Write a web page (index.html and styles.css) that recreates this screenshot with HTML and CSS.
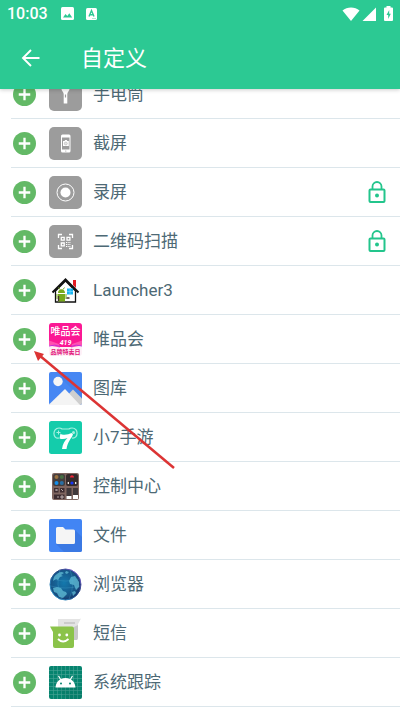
FILE: index.html
```
<!DOCTYPE html>
<html lang="zh-CN">
<head>
  <meta charset="UTF-8">
  <meta name="viewport" content="width=device-width, initial-scale=1">
  <title>自定义</title>
  <link rel="stylesheet" href="styles.css">
</head>
<body>
  <svg class="sprite" aria-hidden="true">
    <symbol id="plus" viewBox="0 0 22 22">
      <circle cx="11" cy="11" r="11" fill="#63b966"/>
      <path d="M11 5.500v11M5.500 11h11" stroke="#fff" stroke-width="2.200"/>
    </symbol>
    <symbol id="lock" viewBox="0 0 18 24">
      <path d="M4.500 9.500V6.500a4.500 4.500 0 0 1 9 0v3" fill="none" stroke="#23c58c" stroke-width="1.800"/>
      <rect x="1.500" y="9.500" width="15" height="12.500" rx="1" fill="none" stroke="#23c58c" stroke-width="2"/>
      <circle cx="9" cy="15.500" r="2" fill="#23c58c"/>
    </symbol>
  </svg>

  <header class="header">
    <div class="status">
      <span class="time">10:03</span>
      <svg class="status-picture" width="13" height="13" viewBox="0 0 13 13">
        <rect width="13" height="13" rx="1.500" fill="#fff"/>
        <path d="M2 10.500 4.500 7l1.800 2 2-2.800 2.900 4.300z" fill="#2cc993"/>
      </svg>
      <svg class="status-letter" width="11" height="12" viewBox="0 0 11 12">
        <rect width="11" height="12" rx="1.500" fill="#fff"/>
        <path d="M3 8.500 5.500 2.500 8 8.500M3.800 6.700h3.400" fill="none" stroke="#2cc993" stroke-width="1.400"/>
        <path d="M6 10.500h4" stroke="#9ce3c8" stroke-width=".8"/>
      </svg>
      <div class="signals">
        <svg width="18" height="14" viewBox="0 0 18 14"><path d="M.5 3.500C5-.5 13-.5 17.500 3.500L9 14z" fill="#fff"/></svg>
        <svg width="14" height="14" viewBox="0 0 14 14"><path d="M14 .5V14H.5z" fill="#fff"/></svg>
        <svg class="battery" width="9" height="15" viewBox="0 0 9 15">
          <path d="M2.500 1.500V0h4v1.500H8a1 1 0 0 1 1 1V14a1 1 0 0 1-1 1H1a1 1 0 0 1-1-1V2.500a1 1 0 0 1 1-1z" fill="#fff"/>
          <path d="M5.200 4 2.500 9h1.700v4L6.800 7.800H5.200z" fill="#2cc993"/>
        </svg>
      </div>
    </div>
    <div class="toolbar">
      <button class="back" aria-label="返回">
        <svg width="20" height="20" viewBox="0 0 20 20"><path d="M18.500 10H2.500M10 2 2 10l8 8" fill="none" stroke="#fff" stroke-width="1.900"/></svg>
      </button>
      <h1>自定义</h1>
    </div>
  </header>

  <main class="content">
    <ul class="list">
      <li class="item">
        <button class="add" aria-label="添加 手电筒"><svg><use href="#plus"/></svg></button>
        <svg class="icon" viewBox="0 0 33 33">
          <rect width="33" height="33" rx="5" fill="#9c9c9c"/>
          <path d="M12.500 7h8v4c0 2-2.200 3-2.200 5v9.500h-3.600V16c0-2-2.200-3-2.200-5z" fill="#fff"/>
          <path d="M16.500 16.500v3" stroke="#9c9c9c" stroke-width="1.200"/>
        </svg>
        <span class="name">手电筒</span>
      </li>
      <li class="item">
        <button class="add" aria-label="添加 截屏"><svg><use href="#plus"/></svg></button>
        <svg class="icon" viewBox="0 0 33 33">
          <rect width="33" height="33" rx="5" fill="#9c9c9c"/>
          <rect x="12" y="7.500" width="9.500" height="18" rx="1.500" fill="#fff"/>
          <path d="M13 10.500h7.500v12H13z" fill="#9c9c9c"/>
          <path d="M14 14h1.500l.6-1h1.600l.6 1h1.500v5H14z" fill="#fff"/>
          <circle cx="16.800" cy="16.500" r="1.500" fill="#e5e5e5" stroke="#aaa" stroke-width=".5"/>
          <circle cx="16.800" cy="24" r=".6" fill="#9c9c9c"/>
        </svg>
        <span class="name">截屏</span>
      </li>
      <li class="item">
        <button class="add" aria-label="添加 录屏"><svg><use href="#plus"/></svg></button>
        <svg class="icon" viewBox="0 0 33 33">
          <rect width="33" height="33" rx="5" fill="#9c9c9c"/>
          <circle cx="16.500" cy="16.500" r="8.500" fill="none" stroke="#fff" stroke-width="1"/>
          <circle cx="16.500" cy="16.500" r="5" fill="#fff"/>
        </svg>
        <span class="name">录屏</span>
        <svg class="lock"><use href="#lock"/></svg>
      </li>
      <li class="item">
        <button class="add" aria-label="添加 二维码扫描"><svg><use href="#plus"/></svg></button>
        <svg class="icon" viewBox="0 0 33 33">
          <rect width="33" height="33" rx="5" fill="#9c9c9c"/>
          <path d="M9.500 13v-3.500H13M20 9.500h3.500V13M23.500 20v3.500H20M13 23.500H9.500V20" fill="none" stroke="#fff" stroke-width="1.300"/>
          <path d="M12.300 12.300h2.900v2.900h-2.900zM18 12.300h2.900v2.900H18zM12.300 18h2.900v2.900h-2.900z" fill="none" stroke="#fff" stroke-width="1.300"/>
          <path d="M17 17.500h4.500M17 19.500h4.500M17 21.500h4.500" stroke="#fff" stroke-dasharray="1 .7"/>
        </svg>
        <span class="name">二维码扫描</span>
        <svg class="lock"><use href="#lock"/></svg>
      </li>
      <li class="item">
        <button class="add" aria-label="添加 Launcher3"><svg><use href="#plus"/></svg></button>
        <svg class="icon" viewBox="0 0 33 33">
          <path d="M24 6h3v8l-3-3z" fill="#e51c23"/>
          <path d="M6.500 17 16.500 7l10 10v11h-20z" fill="#fff" stroke="#111" stroke-width="1.300"/>
          <path d="M3.500 18.500 16.500 5.500l13 13" fill="none" stroke="#111" stroke-width="2"/>
          <path d="M18 14.500h6v6h-6z" fill="#17b4f1"/>
          <path d="M21 14.500v6M18 17.500h6" stroke="#77d6fa" stroke-width=".7"/>
          <path d="M9 19c0-5 7-5 7 0zM9 20h7v7.500H9zM7.500 20h1v5h-1zM16.500 20h1v5h-1z" fill="#78a91c"/>
          <path d="m9.500 13.500 1.500 2m4.500-2-1.500 2" stroke="#78a91c"/>
          <path d="M9.500 22v5M17.500 24h3" stroke="#46322c" stroke-width="1.300"/>
        </svg>
        <span class="name">Launcher3</span>
      </li>
      <li class="item">
        <button class="add" aria-label="添加 唯品会"><svg><use href="#plus"/></svg></button>
        <svg class="icon vip" viewBox="0 0 33 33">
          <rect width="33" height="33" rx="3" fill="#fff0f7"/>
          <path d="M0 19V3a3 3 0 0 1 3-3h27a3 3 0 0 1 3 3v16l-10 5H10z" fill="#fb1894"/>
          <path d="M0 17.500 10 21l1 3.500L0 22.500zM33 17.500 23 21l-1 3.500 11-2z" fill="#ff52b0"/>
          <path d="M0 23q6-2 11 .5M33 23q-6-2-11 .5" stroke="#c42bd8" fill="none"/>
          <text class="vip-name" x="16.500" y="12" text-anchor="middle">唯品会</text>
          <text class="vip-date" x="16.500" y="22" text-anchor="middle">419</text>
          <text class="vip-sale" x="16.500" y="31" text-anchor="middle">品牌特卖日</text>
        </svg>
        <span class="name">唯品会</span>
      </li>
      <li class="item">
        <button class="add" aria-label="添加 图库"><svg><use href="#plus"/></svg></button>
        <svg class="icon" viewBox="0 0 33 33">
          <rect width="33" height="33" rx="2" fill="#4787f3"/>
          <path d="m12 6 21 21v-8L19 4z" fill="#3c76dc" opacity=".35"/>
          <circle cx="9" cy="9.500" r="4.700" fill="#f6f6f6"/>
          <path d="m14 28 10-10.500 9 9V31a2 2 0 0 1-2 2H14z" fill="#cfcfcf"/>
          <path d="M0 32.500 16 17l15 16H1z" fill="#f4f4f4"/>
        </svg>
        <span class="name">图库</span>
      </li>
      <li class="item">
        <button class="add" aria-label="添加 小7手游"><svg><use href="#plus"/></svg></button>
        <svg class="icon" viewBox="0 0 33 33">
          <rect width="33" height="33" rx="2.500" fill="#14ccab"/>
          <path d="M10 17C3.500 18.500 3 7 10 7q2 0 3 1h7q1-1 3-1c7 0 6.500 11 0 10" fill="none" stroke="#a7f0e0" stroke-width="1.200"/>
          <path d="M7.500 11.500h4M9.500 9.500v4" stroke="#a7f0e0"/>
          <circle cx="24.500" cy="11.500" r="1.500" fill="#a7f0e0"/>
          <path d="M11.500 12.500q1 1.500 4 1.200 4-.2 7-1.700l1.500 1.500c-1.500 4-5.500 7-6.500 14.500H13c.5-5 3-8.500 5.500-11-3 1.500-6 1.300-8 .5z" fill="#fff"/>
        </svg>
        <span class="name">小7手游</span>
      </li>
      <li class="item">
        <button class="add" aria-label="添加 控制中心"><svg><use href="#plus"/></svg></button>
        <svg class="icon" viewBox="0 0 33 33">
          <rect x="3" y="3" width="27" height="27" rx="2" fill="#806660"/>
          <rect x="4" y="4" width="12" height="12" rx="2" fill="#453e3e"/>
          <rect x="17" y="4" width="12" height="12" rx="2" fill="#352b2c"/>
          <circle cx="7.500" cy="7" r="2" fill="#9b7240"/>
          <circle cx="12.800" cy="7" r="2" fill="#466e43"/>
          <circle cx="7.500" cy="13" r="2" fill="#168ee9"/>
          <circle cx="12.800" cy="13" r="2" fill="#2a70a5"/>
          <path d="M21 7.500c0-3 4-3 4 0z" fill="#f02336"/>
          <circle cx="23" cy="13" r="1.600" fill="#1735fa"/>
          <path d="m18 13 2-1.200v2.400zM28 13l-2-1.200v2.400z" fill="#fff"/>
          <path d="M5 18h4.500v4.500H5zM11 18h4.500v4.500H11zM5 24.500h10.500V29H5z" fill="#3e2d31"/>
          <path d="m6.500 20 1-1 1 1-1 1zM12 19l2 2M8 27h2M12 26h2v2h-2z" fill="none" stroke="#d6c6c6" stroke-width=".8"/>
          <path d="M17.500 18h5v11h-5zM24 18h5v11h-5z" fill="#40383b"/>
          <path d="M17.500 26h5v3h-5zM24 25h5v4h-5z" fill="#fff"/>
        </svg>
        <span class="name">控制中心</span>
      </li>
      <li class="item">
        <button class="add" aria-label="添加 文件"><svg><use href="#plus"/></svg></button>
        <svg class="icon" viewBox="0 0 33 33">
          <rect width="33" height="33" rx="2" fill="#4285f4"/>
          <path d="m26 11 7 7v13a2 2 0 0 1-2 2H15l-8-8z" fill="#3b79e3"/>
          <path d="M7 9.500Q7 8 8.500 8h5.500l2.500 2.500h8Q26 10.500 26 12v11.500q0 1.500-1.500 1.500h-16Q7 25 7 23.500z" fill="#f5f5f5"/>
        </svg>
        <span class="name">文件</span>
      </li>
      <li class="item">
        <button class="add" aria-label="添加 浏览器"><svg><use href="#plus"/></svg></button>
        <svg class="icon" viewBox="0 0 33 33">
          <defs>
            <radialGradient id="globe" cx=".45" cy=".45" r=".6">
              <stop offset="0" stop-color="#1479ad"/>
              <stop offset=".7" stop-color="#175587"/>
              <stop offset="1" stop-color="#172e65"/>
            </radialGradient>
            <linearGradient id="rim" x1="0" y1="1" x2="1" y2="0">
              <stop offset="0" stop-color="#29a9dd"/>
              <stop offset=".6" stop-color="#24407c"/>
              <stop offset="1" stop-color="#a36cf5"/>
            </linearGradient>
          </defs>
          <circle cx="16.500" cy="16.500" r="15.500" fill="url(#globe)" stroke="url(#rim)" stroke-width="1"/>
          <path d="M5 9c2-3 5-5 8-5l2 1-3 2 2 1-3 1-2 3-2-1-3 2zM17 3l3 1-2 2-2-1zM4 20l4-1 4 1 2 3 3 1 1 2-4 4-4-1-2-4-3-1zM20 13l2-4 4-1 4 6v5l-3 3-2-5-4-1zM23 24l3-1 1 2-3 3z" fill="#68c5dc" opacity=".7"/>
          <path d="M4 11q12 4 26 0M2 18q14 4 29 0M11 2q-5 14 2 29M21 2q6 14-1 29" fill="none" stroke="#52b5d8" stroke-width=".5" opacity=".5"/>
        </svg>
        <span class="name">浏览器</span>
      </li>
      <li class="item">
        <button class="add" aria-label="添加 短信"><svg><use href="#plus"/></svg></button>
        <svg class="icon" viewBox="0 0 33 33">
          <path d="M9 2h20q1.500 0 3-.5L29 7v14q0 2-2 2H11q-2 0-2-2z" fill="#e4e4e4"/>
          <path d="M15 6h11" stroke="#c3c3c3" stroke-width="1.500"/>
          <path d="M25 10v13h3q1-1 1-3V8z" fill="#c8c8c8"/>
          <path d="M1 9.500h22q2 0 2 2V29q0 2-2 2H6q-2 0-2-2V15z" fill="#8bc34a"/>
          <circle cx="10.500" cy="18" r="1.400" fill="#fff"/>
          <circle cx="17.800" cy="18" r="1.400" fill="#fff"/>
          <path d="M9 22q5 5 10.500 0" fill="none" stroke="#fff" stroke-width="1.800"/>
        </svg>
        <span class="name">短信</span>
      </li>
      <li class="item">
        <button class="add" aria-label="添加 系统跟踪"><svg><use href="#plus"/></svg></button>
        <svg class="icon" viewBox="0 0 33 33">
          <rect width="33" height="33" rx="2" fill="#06846f"/>
          <path d="M4.500 0v33M8.500 0v33M12.500 0v33M16.500 0v33M20.500 0v33M24.500 0v33M28.500 0v33M0 4.500h33M0 8.500h33M0 12.500h33M0 16.500h33M0 20.500h33M0 24.500h33M0 28.500h33" stroke="#4aa596" stroke-width=".6"/>
          <path d="m27 20 6 6v5a2 2 0 0 1-2 2H18L7 21z" fill="#04604f" opacity=".15"/>
          <path d="M6.500 21.500c.3-4 2.200-6.500 4.500-8l-2-3.300 1-.6 2 3.300q4.500-1.800 9 0l2-3.300 1 .6-2 3.300c2.300 1.500 4.200 4 4.500 8z" fill="#fff"/>
          <circle cx="12" cy="17.500" r="1" fill="#06846f"/>
          <circle cx="21" cy="17.500" r="1" fill="#06846f"/>
        </svg>
        <span class="name">系统跟踪</span>
      </li>
    </ul>
  </main>

  <!-- arrow pointing at the add button -->
  <svg class="pointer" width="144" height="122" viewBox="0 0 144 122" aria-hidden="true">
    <path d="M6 5 141 118" stroke="#dc3434" stroke-width="2.500"/>
    <path d="m1 1 10 3-6 7z" fill="#dc3434"/>
  </svg>
</body>
</html>
```
FILE: styles.css
```
* {
  box-sizing: border-box;
  margin: 0;
  padding: 0;
}

body {
  display: flex;
  flex-direction: column;
  height: 100vh;
  overflow: hidden;
  font-family: Roboto, 'Noto Sans CJK SC', sans-serif;
  background: #fff;
  color: #4d6975;
}

button {
  border: none;
  background: none;
  cursor: pointer;
}

svg {
  display: block;
  flex-shrink: 0;
}

.sprite {
  position: absolute;
  width: 0;
  height: 0;
}

.header {
  position: relative;
  z-index: 1;
  background: #2cc993;
  color: #fff;
  box-shadow: 0 1px 4px rgba(0, 0, 0, 0.2);
}

.status {
  display: flex;
  align-items: center;
  height: 27px;
  padding: 0 7px;
}

.time {
  font-size: 16px;
  font-weight: 500;
}

.status-picture {
  margin-left: 13px;
}

.status-letter {
  margin-left: 12px;
}

.signals {
  display: flex;
  align-items: center;
  gap: 2px;
  margin-left: auto;
}

.battery {
  margin-left: 6px;
}

.toolbar {
  display: flex;
  align-items: center;
  height: 62px;
  padding: 0 21px;
  gap: 40px;
}

h1 {
  padding-bottom: 4px;
  font-size: 22px;
  font-weight: 400;
}

.content {
  flex: 1;
  min-height: 0;
}

/* the list is scrolled a little under the header */
.list {
  list-style: none;
  margin-top: -19px;
  padding-left: 11px;
}

.item {
  display: flex;
  align-items: center;
  height: 49px;
  padding: 0 14px 0 2px;
  border-bottom: 1px solid #dce6eb;
}

.add,
.add svg {
  width: 23px;
  height: 23px;
}

.icon {
  width: 33px;
  height: 33px;
  margin: 0 11px 0 13px;
}

.name {
  font-size: 17px;
  line-height: 24px;
}

.lock {
  width: 18px;
  height: 24px;
  margin-left: auto;
}

.vip-name,
.vip-sale {
  font-family: 'Noto Sans CJK SC', sans-serif;
}

.vip-name {
  font-size: 10px;
  font-weight: 500;
  fill: #fff;
}

.vip-date {
  font-size: 7px;
  font-weight: 700;
  font-style: italic;
  fill: #fff;
}

.vip-sale {
  font-size: 6px;
  font-weight: 700;
  fill: #e2157c;
}

.pointer {
  position: absolute;
  left: 33px;
  top: 350px;
  pointer-events: none;
}
```
